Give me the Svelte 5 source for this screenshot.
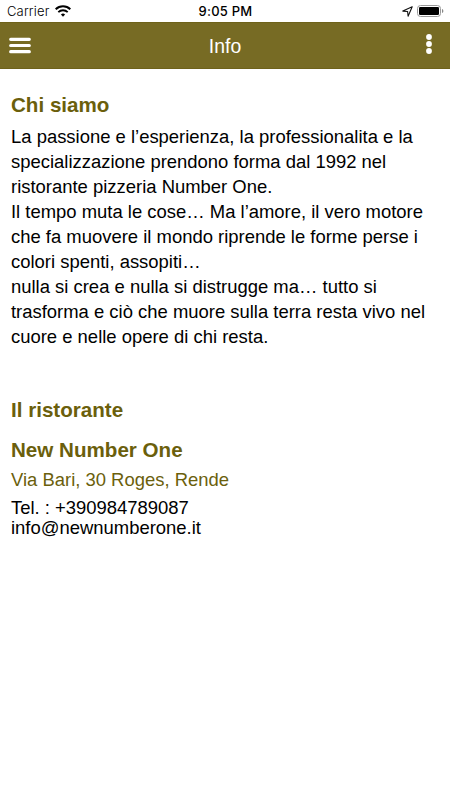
<script>
  const about = [
    'La passione e l’esperienza, la professionalita e la',
    'specializzazione prendono forma dal 1992 nel',
    'ristorante pizzeria Number One.',
    'Il tempo muta le cose… Ma l’amore, il vero motore',
    'che fa muovere il mondo riprende le forme perse i',
    'colori spenti, assopiti…',
    'nulla si crea e nulla si distrugge ma… tutto si',
    'trasforma e ciò che muore sulla terra resta vivo nel',
    'cuore e nelle opere di chi resta.'
  ];
</script>

<div class="screen">
  <div class="status-bar">
    <div class="carrier">
      <span>Carrier</span>
      <svg width="16" height="12" viewBox="0 0 16 12" fill="none" stroke="#000">
        <path d="M.7 4.2a10.3 10.3 0 0 1 14.6 0" stroke-width="2" />
        <path d="M3.3 7.2a6.7 6.7 0 0 1 9.4 0" stroke-width="1.8" />
        <path d="M5.9 9.6a3 3 0 0 1 4.2 0L8 11.8z" fill="#000" stroke="none" />
      </svg>
    </div>
    <div class="time">9:05 PM</div>
    <div class="indicators">
      <svg width="11" height="11" viewBox="0 0 11 11" fill="none" stroke="#111" stroke-width="1.1" stroke-linejoin="round">
        <path d="M10.2.8L.8 5.1l4.8.4.5 4.7z" />
      </svg>
      <svg width="27" height="12" viewBox="0 0 27 12">
        <rect x="0.5" y="0.5" width="23" height="11" rx="3" fill="none" stroke="#999" />
        <rect x="2" y="2" width="20" height="8" rx="1.2" />
        <path d="M25 4c1.8.5 1.8 3.5 0 4z" fill="#888" />
      </svg>
    </div>
  </div>

  <header>
    <button class="menu" aria-label="Menu">
      <svg width="22" height="17" viewBox="0 0 22 17" stroke="#fff" stroke-width="3.2" stroke-linecap="round">
        <path d="M1.7 2.3h18.6M1.7 8.5h18.6M1.7 14.7h18.6" />
      </svg>
    </button>
    <h1>Info</h1>
    <button class="more" aria-label="Altro">
      <svg width="6" height="20" viewBox="0 0 6 20" fill="#fff">
        <circle cx="3" cy="3" r="2.9" />
        <circle cx="3" cy="10" r="2.9" />
        <circle cx="3" cy="17" r="2.9" />
      </svg>
    </button>
  </header>

  <main>
    <h2>Chi siamo</h2>
    <p class="about">
      {#each about as line}
        <span>{line}</span>
      {/each}
    </p>

    <h2 class="restaurant">Il ristorante</h2>
    <h2 class="name">New Number One</h2>
    <p class="address">Via Bari, 30 Roges, Rende</p>
    <p class="contacts">
      <span>Tel. : +390984789087</span>
      <span>info@newnumberone.it</span>
    </p>
  </main>
</div>

<style>
  :global(body) {
    background: #fff;
  }
  .screen {
    height: 800px;
    overflow: hidden;
    font-family: "Liberation Sans", Arial, sans-serif;
    color: #000;
  }
  .status-bar {
    display: grid;
    grid-template-columns: 1fr auto 1fr;
    align-items: center;
    height: 22px;
    padding: 0 6px 0 7px;
    font-family: Inter, sans-serif;
    font-size: 13px;
  }
  .carrier {
    display: flex;
    align-items: center;
    gap: 5px;
    font-weight: 300;
    letter-spacing: 0.15px;
  }
  .time {
    font-weight: 500;
    letter-spacing: 0.25px;
  }
  .indicators {
    display: flex;
    align-items: center;
    justify-content: flex-end;
    gap: 4px;
  }
  header {
    display: flex;
    align-items: center;
    justify-content: space-between;
    box-sizing: border-box;
    height: 47px;
    border-top: 1px solid #6e621a;
    border-bottom: 1px solid #6e621a;
    background: #776b24;
    color: #fff;
  }
  button {
    display: flex;
    border: none;
    background: none;
    width: 42px;
    padding: 0;
  }
  .menu {
    padding-left: 9px;
  }
  .more {
    justify-content: flex-end;
    padding: 0 18px 4px 0;
  }
  h1 {
    margin: 0;
    padding-top: 1px;
    font-size: 19.4px;
    font-weight: 400;
  }
  main {
    padding: 24px 11px 0;
  }
  h2 {
    margin: 0;
    font-size: 20.6px;
    line-height: 24px;
    font-weight: 700;
    color: #6b5f0c;
  }
  p {
    margin: 0;
    font-size: 18.46px;
    white-space: nowrap;
  }
  span {
    display: block;
  }
  .about {
    margin-top: 7px;
    line-height: 25px;
  }
  .restaurant {
    margin-top: 49px;
  }
  .name {
    margin-top: 16px;
  }
  .address {
    margin-top: 6px;
    line-height: 24px;
    color: #6b5f0c;
  }
  .contacts {
    margin-top: 6px;
    line-height: 20px;
  }
</style>
